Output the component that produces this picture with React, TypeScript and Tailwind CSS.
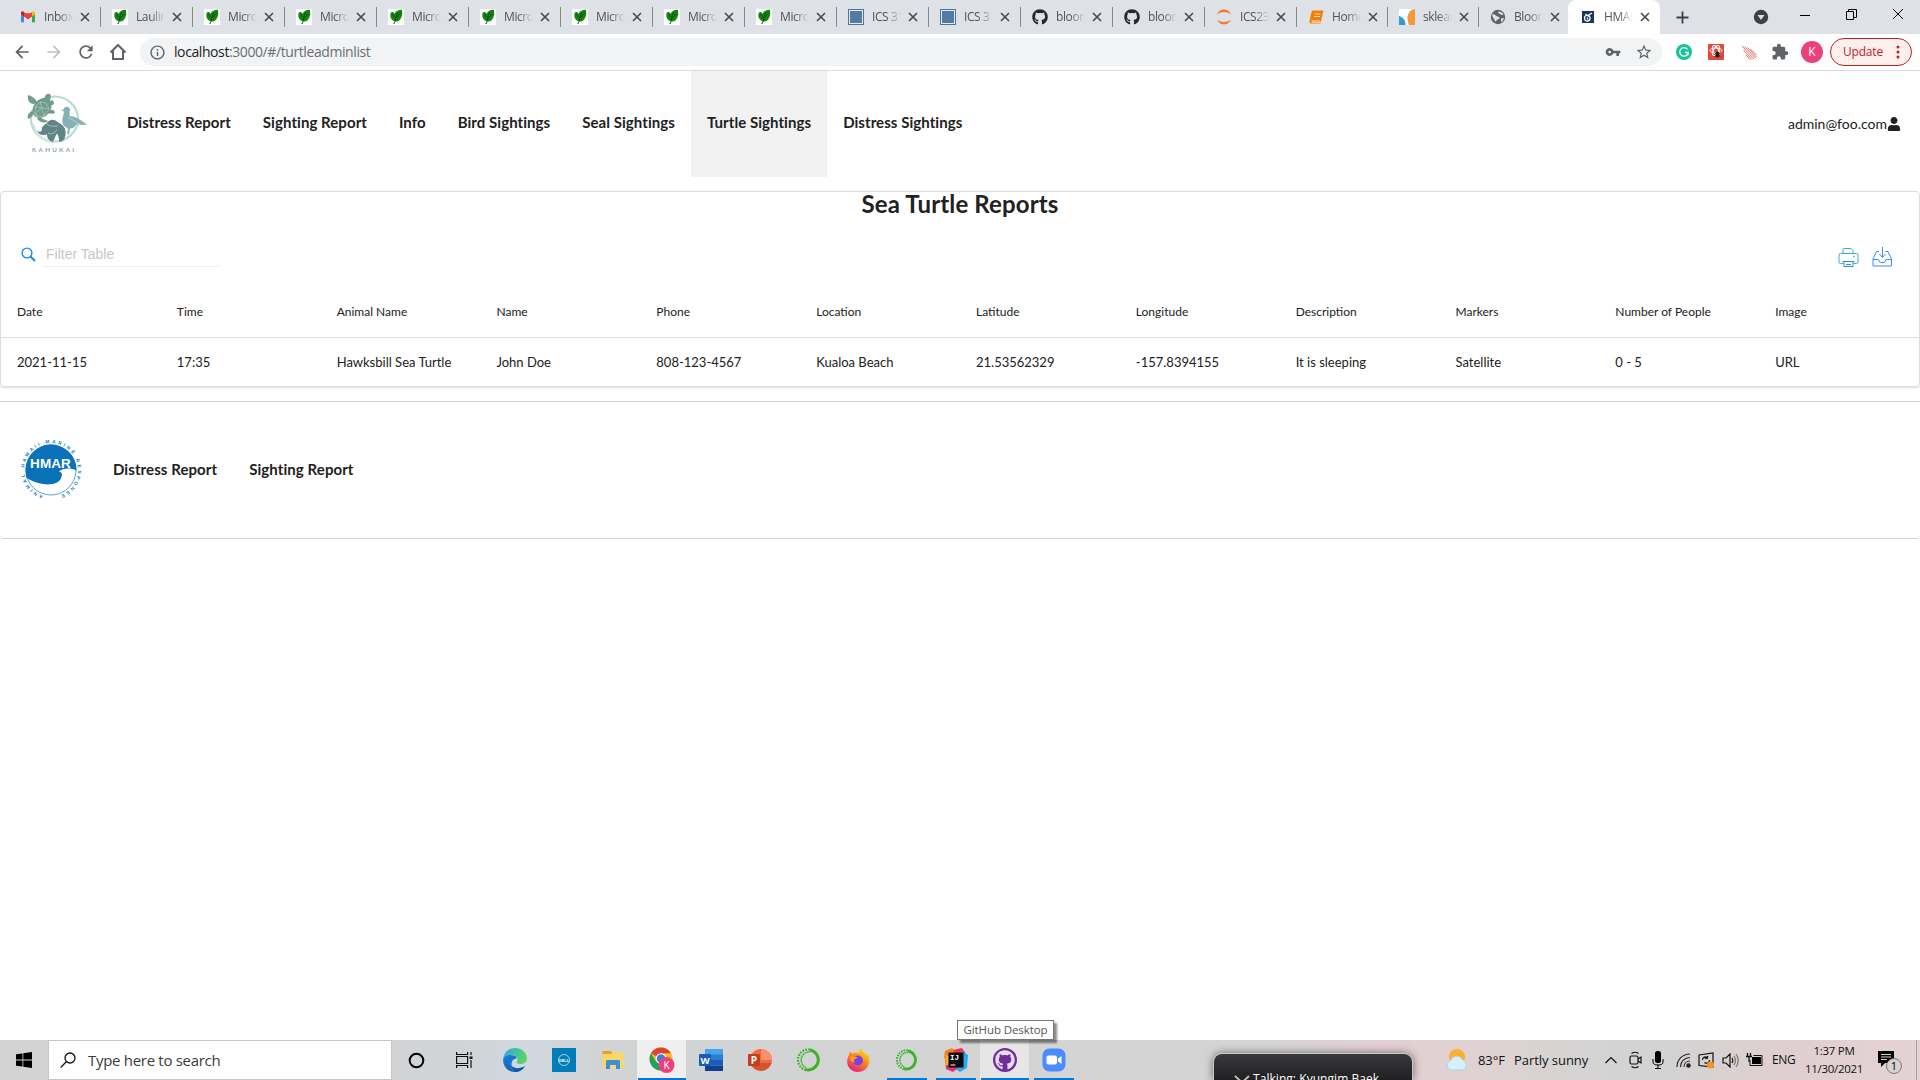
import React from 'react';
import { FaGithub, FaUser } from 'react-icons/fa';
import { MdVpnKey, MdStarBorder, MdExtension, MdArrowBack, MdArrowForward, MdRefresh, MdInfoOutline } from 'react-icons/md';

const Gmail = () => (
  <svg width="16" height="16" viewBox="0 0 16 16">
    <path d="M1 4.2V13h3V7.4L8 10.4l4-3V13h3V4.2z" fill="#ea4335" />
    <path d="M4 7.400v5.600h8V7.400l-4 3z" fill="#dee1e6" />
    <path d="M1 5v8.2h3V6.8z" fill="#4285f4" />
    <path d="M12 6.8v6.4h3V5z" fill="#34a853" />
    <path d="M1 4c0-1.6 1.6-2.1 2.6-1.3L4 3v4.4L1 5.2z" fill="#c5221f" />
    <path d="M15 4c0-1.6-1.6-2.1-2.6-1.3L12 3v4.4l3-2.2z" fill="#fbbc04" />
    <path d="M4 3l4 3 4-3v4.3l-4 3-4-3z" fill="#ea4335" />
  </svg>
);
const Leaf = () => (
  <svg width="16" height="16" viewBox="0 0 16 16">
    <rect width="16" height="16" fill="#fff" />
    <path d="M8 12.500C3 12 1.200 7 3 3.500c1-1 2.500-.8 3.600 1.200C7.500 2.500 10 .6 14 .8c-.2 2 1 4-.5 7.200C12.500 11 10.500 12.500 8 12.500z" fill="#12850f" />
    <path d="M9.500 3.500c-1.500 3-1.200 6-2.500 9-.4 1-.6 2-1.500 2.500M8.300 9l4-4.500M7.800 9.500 4.500 5.500" fill="none" stroke="#0a4d0a" strokeWidth="1" />
  </svg>
);
const Ics = () => (
  <svg width="16" height="16" viewBox="0 0 16 16">
    <rect width="16" height="16" fill="#4f7499" />
    <rect x="1.500" y="1.500" width="13" height="13" fill="#557ba3" stroke="#e6ecf2" />
  </svg>
);
const Jupyter = () => (
  <svg width="16" height="16" viewBox="0 0 16 16" fill="#f37726">
    <path d="M1 5.500C3 1.500 5.500.6 8 .6s5 .9 7 4.900C12.500 3.700 10.500 3 8 3s-4.500.7-7 2.500z" />
    <path d="M1 10.500C3 14.500 5.500 15.400 8 15.400s5-.9 7-4.900C12.500 12.300 10.500 13 8 13s-4.500-.7-7-2.500z" />
  </svg>
);
const Sk = () => (
  <svg width="16" height="16" viewBox="0 0 16 16">
    <rect width="16" height="16" fill="#fff" />
    <path d="M0 7c4 1 6.500 4 6.500 9H0z" fill="#3499cd" />
    <path d="M16 0C9.500.5 6.500 8 10 16h6z" fill="#f89939" />
  </svg>
);
const Globe = () => (
  <svg width="16" height="16" viewBox="0 0 16 16">
    <circle cx="8" cy="8" r="7.200" fill="#5f6368" />
    <path d="M2 5.500c2-.8 3.500.4 4.500 1.500s3 .4 3 2-2.500 1-3 2.500-1.500 1-2-.5S2.500 8.500 2 5.500zM8.500 2.500c2 0 4 1 5 3-1 .8-2.500.6-3.500-.4S7.500 4 8.500 2.500zM11 9.500l3-.5c-.4 2-1.600 3.500-3 4z" fill="#dee1e6" />
  </svg>
);
const Hma = () => (
  <svg width="16" height="16" viewBox="0 0 16 16">
    <rect x="2" y="2" width="12" height="12" fill="#1d3461" />
    <path d="M7.500 6.500C4.500 6 4 9 5 11c1.500 1.500 4.500 1.500 5-1 .4-2-1-3.500-2.500-3.500L5.500 5M8 6.500l4-2.500M7.500 8.500v2" stroke="#fff" strokeWidth="1.300" fill="none" />
  </svg>
);
const Close = () => (
  <svg width="10" height="10" viewBox="0 0 10 10" stroke="#45494d" strokeWidth="1.600">
    <path d="M1 1l8 8M9 1L1 9" />
  </svg>
);

type Tab = [() => React.ReactElement, string, string];
const GitTab = () => <FaGithub size={16} color="#24292f" />;
const BookTab = () => (
  <svg width="15" height="14" viewBox="0 0 15 14"><path d="M4 .5h9.500q1 0 .8 1L12 11q-.3 1-1.300 1H3q-1 0-1 .7h9l1 .8H2Q0 13.500.5 11L2.500 2Q2.800.5 4 .5z" fill="#f57c00" /><path d="M5.500 4h6M5 6.500h6M2.500 11h8.500" stroke="#fde3c8" fill="none" /></svg>
);
const tabs: Tab[] = [
  [Gmail, 'Inbox', 'w-[92px]'],
  [Leaf, 'Lauline', 'w-[92px]'],
  [Leaf, 'Micros', 'w-[92px]'],
  [Leaf, 'Micros', 'w-[92px]'],
  [Leaf, 'Micros', 'w-[92px]'],
  [Leaf, 'Micros', 'w-[92px]'],
  [Leaf, 'Micros', 'w-[92px]'],
  [Leaf, 'Micros', 'w-[92px]'],
  [Leaf, 'Micros', 'w-[92px]'],
  [Ics, 'ICS 31', 'w-[92px]'],
  [Ics, 'ICS 31', 'w-[92px]'],
  [GitTab, 'bloom', 'w-[92px]'],
  [GitTab, 'bloom', 'w-[92px]'],
  [Jupyter, 'ICS235', 'w-[92px]'],
  [BookTab, 'Home', 'w-[91px]'],
  [Sk, 'sklear', 'w-[91px]'],
  [Globe, 'Bloom', 'w-[90px]'],
];

const TabBody = ({ icon: Icon, label }: { icon: Tab[0]; label: string }) => (
  <>
    <span className="grid w-4 shrink-0 place-items-center"><Icon /></span>
    <span className="ml-2 w-[29px] shrink-0 overflow-hidden whitespace-nowrap text-xs tracking-[-0.4px] text-[#50555a] [mask-image:linear-gradient(to_right,black_50%,transparent)]">{label}</span>
    <span className="ml-[7px] shrink-0"><Close /></span>
  </>
);

const TabStrip = () => (
  <div className="flex h-[34px] items-end bg-[#dee1e6] pl-2">
    {tabs.map(([icon, label, w], i) => (
      <div key={i} className={`flex h-[34px] shrink-0 items-center pl-3 ${w}`}>
        <TabBody icon={icon} label={label} />
        {i < tabs.length - 1 && <span className="ml-auto h-5 w-px translate-x-px bg-[#85888c]" />}
      </div>
    ))}
    <div className="flex h-[34px] w-[92px] shrink-0 items-center rounded-t-lg bg-white pl-3">
      <TabBody icon={Hma} label="HMAR" />
    </div>
    <div className="flex h-[34px] grow items-center">
      <svg className="ml-4" width="13" height="13" viewBox="0 0 13 13" stroke="#3c4043" strokeWidth="1.800"><path d="M6.500 .5v12M.5 6.500h12" /></svg>
      <svg className="ml-[64px]" width="16" height="16" viewBox="0 0 16 16"><circle cx="8" cy="8" r="7.200" fill="#3c4043" /><path d="M4.500 6h7L8 11z" fill="#dee1e6" /></svg>
      <svg className="mb-1 ml-[31px]" width="11" height="10" viewBox="0 0 11 10" stroke="#000"><path d="M0 5.500h10" /></svg>
      <svg className="mb-1.5 ml-[35px]" width="11" height="11" viewBox="0 0 11 11" stroke="#000" fill="none"><path d="M.5 2.500h7v8h-7zM2.500 2.500v-2h8v8h-3" /></svg>
      <svg className="mb-1.5 ml-[35px]" width="12" height="12" viewBox="0 0 12 12" stroke="#000" fill="none"><path d="M1 1l10 10M11 1L1 11" /></svg>
    </div>
  </div>
);

const Toolbar = () => (
  <div className="flex h-[37px] items-center border-b border-[#d8dadd] bg-white pl-3 text-[#5f6368]">
    <MdArrowBack size={20} />
    <MdArrowForward size={20} className="ml-3 text-[#bdc1c6]" />
    <MdRefresh size={20} className="ml-3" />
    <svg className="ml-3" width="20" height="20" viewBox="0 0 20 20" fill="none" stroke="#5f6368" strokeWidth="2"><path d="M2.500 10.500 10 3l7.500 7.500M5 9v8h10V9" /></svg>
    <div className="ml-3 flex h-7 w-[1522px] items-center rounded-full bg-[#f1f3f4] pl-[9px] pr-[9px]">
      <MdInfoOutline size={17} />
      <span className="ml-2 text-sm tracking-[-0.41px] text-[#6a6e73]"><span className="text-[#202124]">localhost</span>:3000/#/turtleadminlist</span>
      <MdVpnKey size={16} className="ml-auto" />
      <MdStarBorder size={18} className="ml-[14px]" />
    </div>
    <span className="ml-[14px] grid size-4 place-items-center rounded-full bg-[#15c39a] text-white">
      <svg width="12" height="12" viewBox="0 0 12 12" fill="none" stroke="#fff" strokeWidth="1.300"><path d="M9.500 3.400A4.300 4.300 0 1 0 10.300 6.500H7M10.300 6.500V9" /></svg>
    </span>
    <svg className="ml-4" width="16" height="16" viewBox="0 0 16 16"><rect width="16" height="16" rx="1" fill="#dc4a3d" /><g stroke="#fff" fill="none"><ellipse cx="8" cy="6.500" rx="6" ry="2.500" /><ellipse cx="8" cy="6.500" rx="2.500" ry="5.500" transform="rotate(30 8 6.500)" /><ellipse cx="8" cy="6.500" rx="2.500" ry="5.500" transform="rotate(-30 8 6.500)" /></g><ellipse cx="9.500" cy="10.500" rx="2" ry="3" fill="#2a1512" /><path d="M6.500 8.500l6 4M6.500 12.500l6-4" stroke="#2a1512" strokeWidth=".8" /></svg>
    <svg className="ml-[18px]" width="15" height="15" viewBox="0 0 15 15" stroke="#e5605c" strokeWidth=".9" fill="none"><path d="M0 1l12 13M2.500 1.500l11 11.500M5.500 2.500l9 9.500M1.500 5l8.500 9.500M4 10l4 4.500M8.500 4l6 6" /></svg>
    <MdExtension size={18} className="ml-[14px]" />
    <span className="ml-[12px] grid size-[22px] place-items-center rounded-full bg-[#ec407a] text-xs text-white">K</span>
    <span className="ml-[7px] flex h-7 w-[82px] items-center rounded-full border border-[#c5221f] bg-[#fcefee] pl-3 text-xs tracking-[-0.2px] text-[#c5221f]">
      Update
      <svg className="ml-auto mr-[11px]" width="4" height="14" viewBox="0 0 4 14" fill="#c5221f"><circle cx="2" cy="2" r="1.500" /><circle cx="2" cy="7" r="1.500" /><circle cx="2" cy="12" r="1.500" /></svg>
    </span>
  </div>
);

const Kahukai = () => (
  <svg width="62" height="62" viewBox="0 0 62 62">
    <ellipse cx="28.500" cy="27" rx="23.500" ry="22.500" fill="none" stroke="#b5ded3" strokeWidth="2.200" />
    <path d="M8 33C10 44 18 49 27 50" fill="none" stroke="#cfeae3" strokeWidth="2" />
    <g fill="#729c8c">
      <ellipse cx="16" cy="16" rx="8.500" ry="11" transform="rotate(38 16 16)" />
      <path d="M19 8c-1-5 2-7 5-6 2 3 0 6-1 8zM8 12C3 12 1 7 2 3c4 1 8 4 9 7zM22 18c4-1 7 0 7 3-3 1-6 1-9-1zM13 25c2 1 4 2 9 4-4 3-8 1-11-2zM6 19c-4 2-5 5-4 8 3-1 5-4 6-6zM23 10c2-3 5-2 5 1 0 2-3 3-5 2z" />
    </g>
    <path d="M9 15l5-5 6 1 3 6-5 7-7 1zM14 10l2 6 7 1M16 16l-5 4M16 16l2 8M9 15l7 1M8 20l3 5" fill="none" stroke="#b8d3c8" strokeWidth=".6" />
    <path d="M11 38c1 2 3 2 4.500 1 0-4 2-6 5-7.500 3-4.500 8-5 11.500-1 5 2 8.500 6 7.500 12-.5 4-2 7-6 7.500-1-3-.5-6-2.500-8.500-1.500 2-2.500 5-4 8.500-3.500-1-6-3-6-7.500-4 1-8 1-10-4.500z" fill="#608487" />
    <path d="M21 32c3 3 7 2 11 2M22 41c4 2 6 0 9-3" fill="none" stroke="#b3c8c6" strokeWidth=".9" />
    <path d="M34 18.500l4-1.500c0-3 5-3 6 0 0 3-1 5 0 7.500 5-1 9 3 17 8-4 1-8 0-11 0-1 3-4 4-6 4l-1 6-2-1 1-5c-5-2-7-7-5-12 1-3 1-4 0-6z" fill="#88b1b5" />
    <path d="M42 26c4 0 7 5 12 6" fill="none" stroke="#b8d5d6" />
    <text x="6" y="59.500" fontFamily="Lato, sans-serif" fontWeight="700" fontSize="6.200" letterSpacing="2.300" fill="#8aa3a2">KAHUKAI</text>
  </svg>
);

const Hmar = () => (
  <svg width="62" height="62" viewBox="0 0 62 62">
    <defs>
      <path id="ring" d="M31 57.800A26.800 26.800 0 1 1 31.010 57.800" />
    </defs>
    <circle cx="31" cy="31" r="25" fill="#fff" stroke="#5ea3d4" strokeWidth="1" />
    <path d="M6 36A25.500 25.500 0 1 1 56.500 31.500C50 28.500 43 29 39 32.500c4 1 3 4 2 7C36 48 20 47 6.500 39z" fill="#0a72b9" />
    <text x="30.500" y="28.500" textAnchor="middle" fontFamily="Liberation Sans, sans-serif" fontSize="13.500" fill="#fff">HMAR</text>
    <text fontFamily="Liberation Sans, sans-serif" fontWeight="700" fontSize="4.800" letterSpacing="2.300" fill="#1b7cc0"><textPath href="#ring" startOffset="8">ANIMAL HAWAII MARINE RESPONSE</textPath></text>
  </svg>
);

const navItems = ['Distress Report', 'Sighting Report', 'Info', 'Bird Sightings', 'Seal Sightings', 'Turtle Sightings', 'Distress Sightings'];
const columns = [
  ['Date', '2021-11-15'], ['Time', '17:35'], ['Animal Name', 'Hawksbill Sea Turtle'], ['Name', 'John Doe'],
  ['Phone', '808-123-4567'], ['Location', 'Kualoa Beach'], ['Latitude', '21.53562329'], ['Longitude', '-157.8394155'],
  ['Description', 'It is sleeping'], ['Markers', 'Satellite'], ['Number of People', '0 - 5'], ['Image', 'URL'],
];

const Page = () => (
  <main className="h-[969px] bg-white font-['Lato',sans-serif] text-[#212121]">
    <nav className="flex h-[106px] items-center pr-[19px]">
      <div className="ml-[26px] mr-[23px] w-[62px] pb-0.5"><Kahukai /></div>
      {navItems.map((n) => (
        <span key={n} className={`flex h-full items-center whitespace-nowrap px-4 pb-1 text-[15px] font-bold tracking-[0.06px] ${n === 'Turtle Sightings' ? 'bg-[#f2f2f2]' : ''}`}>{n}</span>
      ))}
      <span className="ml-auto flex items-center text-sm">admin@foo.com<FaUser size={14} /></span>
    </nav>
    <section className="mt-[14px] h-[196px] rounded border border-[#dcddde] shadow-[0_1px_2px_rgba(34,36,38,0.15)]">
      <h1 className="text-center text-2xl font-bold leading-6 tracking-[0.12px]">Sea Turtle Reports</h1>
      <div className="mt-7 flex h-[49px] items-start pl-5 pr-[25px]">
        <svg className="mt-[3px]" width="15" height="15" viewBox="0 0 15 15" fill="none" stroke="#1e88f5" strokeWidth="1.400"><circle cx="6" cy="6" r="4.900" /><path d="M9.500 9.500 14 14" strokeWidth="1.900" /></svg>
        <div className="ml-1.5 h-[23px] w-[178px] border-b border-[#efefef] pl-1 font-['Liberation_Sans',sans-serif] text-sm leading-5 text-[#c7c7c7]">Filter Table</div>
        <svg className="ml-auto mt-[3px]" width="21" height="21" viewBox="0 0 21 21" fill="none" stroke="#45a5dc"><path d="M5 6.500V2.500q0-1 1-1h7l2 2v3M5.500 16.500h-3Q1 16.500 1 15V8q0-1.500 1.500-1.500h16Q20 6.500 20 8v7q0 1.500-1.500 1.500h-3" /><path d="M4.500 14.500h12M6 14.500v5h9v-5M8 17.500h5" stroke="#2693d3" /><path d="M15 9.500h1.500" strokeWidth="1.500" /></svg>
        <svg className="ml-[13px] mr-px mt-[3px]" width="21" height="21" viewBox="0 0 21 21" fill="none" stroke="#3f8ef7"><path d="M7 4.500H4.500L1 12v7h18.500v-7L16 4.500h-2.500M1 12.500h5.500c.5 0 .5 3 2 3h3.500c1.500 0 1.500-3 2-3h5.500M10.500 0v10M7.500 7l3 3.500 3-3.500" /></svg>
      </div>
      <div className="grid h-[45px] grid-cols-12 items-center border-b border-[#dededf] pb-1.5 text-xs">
        {columns.map(([h]) => <span key={h} className="pl-4">{h}</span>)}
      </div>
      <div className="grid h-[48px] grid-cols-12 items-center pt-0.5 text-[13px]">
        {columns.map(([h, v]) => <span key={h} className="whitespace-nowrap pl-4">{v}</span>)}
      </div>
    </section>
    <footer className="mt-[14px] flex h-[138px] items-center rounded-b border-y border-[#d4d4d5] pl-5 text-[15px] font-bold tracking-[0.08px]">
      <Hmar />
      <span className="mb-0.5 ml-[31px]">Distress Report</span>
      <span className="mb-0.5 ml-8">Sighting Report</span>
    </footer>
  </main>
);

const Edge = () => (
  <svg width="24" height="24" viewBox="0 0 24 24">
    <defs>
      <linearGradient id="eg" x1="0" y1="0" x2="1" y2=".3"><stop offset="0" stopColor="#2aa7e0" /><stop offset="1" stopColor="#59d36a" /></linearGradient>
      <linearGradient id="eb" x1="0" y1="0" x2="1" y2="1"><stop offset="0" stopColor="#1487d8" /><stop offset="1" stopColor="#0b4a9e" /></linearGradient>
    </defs>
    <path d="M.3 11C1 4 6 0 12 0c7 0 12 5 12 10 0 4-3 6-6.500 6-3 0-4.500-1-3.500-2.500C15.500 11 14 7 9.500 7 5 7 1.500 9 .3 11z" fill="url(#eg)" />
    <path d="M.2 11C1.500 8 5 6.800 9 7c-4 2.500-3.500 7-1 10 3 4 9 4 14 1-2 4-6 6-10 6C5 24-.5 18 .2 11z" fill="url(#eb)" />
    <path d="M9 7.200c-4 1-4.500 4-4.300 7C5 19 8 23 12.500 24c-3-2.500-5-6-3.500-10.500.5-1.500 2-2.500 2.500-2.500C15 11 14 7.300 9 7.200z" fill="#1b74c9" />
  </svg>
);
const Dell = () => (
  <svg width="24" height="24" viewBox="0 0 24 24"><rect width="24" height="24" fill="#007db8" /><circle cx="12" cy="12" r="5.500" fill="none" stroke="#cfe6f3" strokeWidth=".8" /><text x="12" y="13.500" textAnchor="middle" fontSize="3.800" fontWeight="700" fontFamily="Liberation Sans, sans-serif" fill="#fff">DELL</text></svg>
);
const Explorer = () => (
  <svg width="24" height="24" viewBox="0 0 24 24"><path d="M1.500 3h8l1.500 2v4h-9.500z" fill="#e2a31b" /><path d="M1.500 6h9l1.500-1.500h10.500V20h-21z" fill="#fdd666" /><path d="M5 21v-7.500q0-1.500 1.500-1.500h11q1.500 0 1.500 1.500V21h-4v-4H9v4z" fill="#3a8edb" /></svg>
);
const Chrome = () => (
  <svg width="26" height="26" viewBox="0 0 26 26">
    <circle cx="12" cy="12" r="11.500" fill="#fbc116" />
    <path d="M12 12 2 6.300A11.500 11.500 0 0 1 22 6.300h-10z" fill="#dc4437" />
    <path d="M2 6.300A11.500 11.500 0 0 0 12 23.500l5-8.500-10-.5z" fill="#1ea362" />
    <circle cx="12" cy="11.500" r="5.300" fill="#fff" /><circle cx="12" cy="11.500" r="4.200" fill="#3b7de0" />
    <circle cx="17.500" cy="18" r="8" fill="#ec407a" />
    <text x="17.500" y="21.500" textAnchor="middle" fontSize="10" fontFamily="Open Sans, sans-serif" fill="#fff">K</text>
  </svg>
);
const Word = () => (
  <svg width="24" height="24" viewBox="0 0 24 24"><path d="M6 1h18v6H6z" fill="#41a5ee" /><path d="M6 6.500h18V12H6z" fill="#2b7cd3" /><path d="M6 12h18v5.500H6z" fill="#185abd" /><path d="M6 17.500h18V23H6z" fill="#103f91" /><rect y="6" width="12" height="12" rx="1" fill="#185abd" /><text x="6" y="15.500" textAnchor="middle" fontSize="9.500" fontWeight="700" fontFamily="Open Sans, sans-serif" fill="#fff">W</text></svg>
);
const Ppt = () => (
  <svg width="24" height="24" viewBox="0 0 24 24"><circle cx="13" cy="12" r="11" fill="#ed6c47" /><path d="M13 1a11 11 0 0 1 11 11H13z" fill="#ff8f6b" /><path d="M2.500 15A11 11 0 0 0 23.500 15z" fill="#d35230" /><rect y="6" width="12" height="12" rx="1" fill="#c43e1c" /><text x="6" y="15.700" textAnchor="middle" fontSize="10" fontWeight="700" fontFamily="Open Sans, sans-serif" fill="#fff">P</text></svg>
);
const Conda = ({ size = 24 }: { size?: number }) => (
  <svg width={size} height={size} viewBox="0 0 24 24" fill="none" stroke="#3eb12b">
    <path d="M13 2a10 10 0 1 1-5 19.300" strokeWidth="3" />
    <path d="M13 1.500A10.500 10.500 0 0 0 8 21.800" strokeWidth="2.200" strokeDasharray="1.800 1.200" />
    <path d="M13 3.800A8.300 8.300 0 0 0 9 19.600" strokeWidth="1.600" strokeDasharray="1.500 .6" />
  </svg>
);
const Firefox = () => (
  <svg width="24" height="24" viewBox="0 0 24 24">
    <defs><linearGradient id="ff" x1=".8" y1="0" x2=".2" y2="1"><stop offset="0" stopColor="#ffe226" /><stop offset=".45" stopColor="#ff8a16" /><stop offset="1" stopColor="#e31587" /></linearGradient></defs>
    <path d="M3 7c0-2 1-3 1.500-3.500.3 1.500 1 2 2 2.200C9 3.500 12 5 13 5c0-2 1-4 2.500-5 0 2.500 2 3.500 4 5.500 1 1 1 2 1.500 2l1-1.500C26 15 21 24 12 24 4 24-2 16 3 7z" fill="url(#ff)" />
    <circle cx="12" cy="12.500" r="5" fill="#7542e5" /><path d="M4 9c3-1.500 6-.5 8 1-2 0-2 1-3.500 1.500-1 1-.5 2 .5 3-4 0-5-3-5-5.500z" fill="#ff9a1f" />
  </svg>
);
const Intellij = () => (
  <svg width="24" height="24" viewBox="0 0 24 24"><path d="M1 3l7-3 4 4-7 9-5-3z" fill="#fc801d" /><path d="M9 2l9-2 4 6-5 8z" fill="#fe2857" /><path d="M17 3l7 4-1 13-7 4-6-4z" fill="#23a9f5" /><path d="M1 12l5-1 8 9-5 4-7-3z" fill="#e0356c" /><path d="M2 7l4 2v7l-5 2z" fill="#f7a938" /><rect x="4.500" y="4.500" width="15" height="15" fill="#0a0a0a" /><path d="M6.500 17h5" stroke="#fff" /><text x="6" y="12" fontSize="7.500" fontWeight="700" fontFamily="Liberation Mono, monospace" fill="#fff">IJ</text></svg>
);
const GitDesk = () => (
  <span className="grid size-6 place-items-center rounded-full bg-[#6e2f9b]"><FaGithub size={20} color="#e9dcf1" /></span>
);
const Zoom = () => (
  <svg width="24" height="24" viewBox="0 0 24 24"><rect x=".5" y=".5" width="23" height="23" rx="7" fill="#4a8cff" /><rect x="4.500" y="7.500" width="10.500" height="9" rx="2" fill="#fff" /><path d="M15.800 10.800 19.500 8v8l-3.700-2.800z" fill="#fff" /></svg>
);

const apps: [() => React.ReactElement, string, string][] = [
  [Edge, '', ''],
  [Dell, '', ''],
  [Explorer, '', ''],
  [Chrome, 'bg-[#efefef]', 'w-12'],
  [Word, '', ''],
  [Ppt, '', ''],
  [() => <Conda />, '', ''],
  [Firefox, '', ''],
  [() => <Conda size={22} />, '', 'w-10'],
  [Intellij, '', 'w-10'],
  [GitDesk, 'bg-[#e6e6e6]', 'w-12'],
  [Zoom, '', 'w-10'],
];

const Taskbar = () => (
  <div className="relative flex h-10 bg-[linear-gradient(90deg,#d2d2d2_0%,#d2d3d4_24%,#d0d8e0_27%,#d2d3d4_31%,#d4d4d4_66%,#e3cfd3_72%,#e1d1d3_76%,#d5d3d3_82%,#d3d3d3_87%,#e0cfd0_93%,#e4d2d4_100%)] font-['Open_Sans',sans-serif] text-[#111]">
    <div className="grid w-12 place-items-center">
      <svg width="16" height="16" viewBox="0 0 16 16"><path d="M0 2.300 6.500 1.400v6.200H0zM7.300 1.300 16 0v7.600H7.300zM0 8.400h6.500v6.200L0 13.700zM7.300 8.400H16V16l-8.700-1.300z" /></svg>
    </div>
    <div className="flex w-[344px] items-center border border-[#c6c6c6] bg-white pl-[11px] text-[15px] tracking-[-0.3px] text-[#3b3b3b]">
      <svg width="16" height="17" viewBox="0 0 16 17" fill="none" stroke="#111" strokeWidth="1.300"><circle cx="10" cy="6" r="5" /><path d="M6.500 9.500.7 15.500" /></svg>
      <span className="ml-3">Type here to search</span>
    </div>
    <div className="grid w-12 place-items-center"><svg width="17" height="17" viewBox="0 0 17 17"><circle cx="8.500" cy="8.500" r="6.800" fill="none" stroke="#000" strokeWidth="2" /></svg></div>
    <div className="grid w-12 place-items-center">
      <svg width="17" height="16" viewBox="0 0 17 16" fill="none" stroke="#111" strokeWidth="1.200"><path d="M.6 0v2.500h11V0M.6 4.500h11v7H.6zM.6 16v-2.500h11V16M15 0v3M15 8v8" /><path d="M13.500 4.500h3v2.500h-3z" fill="#111" stroke="none" /></svg>
    </div>
    <div className="flex pl-0.5">
      {apps.map(([Icon, bg, bar], i) => (
        <div key={i} className={`flex w-[49px] flex-col items-center justify-end ${bg}`}>
          <div className="grid flex-1 place-items-center pt-0.5"><Icon /></div>
          <div className={`h-0.5 ${bar ? 'bg-[#0078d7]' : ''} ${bar}`} />
        </div>
      ))}
    </div>
    <div className="ml-[135px] mt-[13px] h-[27px] w-[200px] overflow-hidden rounded-t-[9px] border border-b-0 border-[#c9c9c9] bg-gradient-to-b from-[#39393b] to-[#202022] pl-5 pt-[16px] text-[12px] leading-[17px] text-white shadow-[0_0_8px_rgba(0,0,0,0.5)]">
      <span className="flex gap-0.5 whitespace-nowrap tracking-[0.05px]"><svg className="mt-1" width="17" height="16" viewBox="0 0 17 16" stroke="#bbb" strokeWidth="2"><path d="M1 2l14 13M15 2 1 15" /></svg>Talking: Kyungim Baek</span>
    </div>
    <div className="flex flex-1 items-center">
      <svg className="ml-[32px]" width="24" height="24" viewBox="0 0 24 24"><circle cx="12" cy="9" r="8" fill="#fbb02e" /><path d="M6 22a5 5 0 0 1-.5-9.500 6.500 6.500 0 0 1 12-.5A5.200 5.200 0 0 1 17.500 22z" fill="#d8effc" stroke="#a9d5f2" /></svg>
      <span className="mt-0.5 ml-[9px] w-9 whitespace-nowrap text-[13px] tracking-[-0.1px]">83°F</span>
      <span className="mt-0.5 w-[91px] whitespace-nowrap text-[13px] tracking-[-0.05px]">Partly sunny</span>
      <svg width="12" height="8" viewBox="0 0 12 8" fill="none" stroke="#111" strokeWidth="1.200"><path d="M.5 7 6 1.500 11.500 7" /></svg>
      <svg className="ml-[12px]" width="13" height="18" viewBox="0 0 13 18" fill="none" stroke="#111" strokeWidth="1.200"><rect x="1" y="5" width="8" height="8" rx="1.500" /><path d="M9 8l3-2v6L9 10M2.500 2.500Q6 0 9.500 2.500M2.500 15.500Q6 18 9.500 15.500" /></svg>
      <svg className="ml-[10px]" width="12" height="18" viewBox="0 0 12 18"><rect x="3" y="0" width="6" height="12" rx="2.500" /><path d="M1 8v3q0 3 5 3t5-3V8M6 14v3.500M3 17.500h6" fill="none" stroke="#000" /></svg>
      <svg className="ml-[12px]" width="15" height="15" viewBox="0 0 15 15" fill="none" stroke="#222" strokeWidth="1.100"><path d="M1 14C1 6.500 6.500 1 14 1M4.500 14C4.500 8.500 8.500 4.500 14 4.500M8 14c0-3.500 2.500-6 6-6" /><circle cx="12.500" cy="12.500" r="1.700" fill="#222" /></svg>
      <svg className="ml-[7px]" width="17" height="17" viewBox="0 0 17 17" fill="none" stroke="#111" strokeWidth="1.200"><path d="M1 3l14-2v14L1 13.500zM10 4l-1 2.500-2.500-.5M4.500 8c0-3 3-4 5-2M11.500 8c0 3-3 4-5 2.500" /><circle cx="12.500" cy="13" r="3.600" fill="#f7941d" stroke="none" /></svg>
      <svg className="ml-[7px]" width="17" height="15" viewBox="0 0 17 15" fill="none" stroke="#111" strokeWidth="1.200"><path d="M1 5h3l4-4v13L4 10H1zM10 5q1.500 2.500 0 5" /><path d="M12 3q3 4.500 0 9M14 1q4.500 6.500 0 13" stroke="#777" /></svg>
      <svg className="ml-[7px]" width="17" height="14" viewBox="0 0 17 14"><path d="M1.500 0v3M4.500 0v3M0 3.500h6M3 4v5" stroke="#111" fill="none" strokeWidth="1.300" /><rect x="6" y="4" width="9" height="7" /><path d="M4 7v5.500h12v-10H7.500" stroke="#111" fill="none" /></svg>
      <span className="ml-[9px] w-[31px] text-xs tracking-[-0.3px]">ENG</span>
      <span className="w-[62px] whitespace-nowrap text-center text-[11.5px] leading-[18px] tracking-[-0.3px]">1:37 PM<br />11/30/2021</span>
      <svg className="ml-[12px] mt-1" width="26" height="26" viewBox="0 0 26 26"><path d="M1 2h16v12h-9l-4 4v-4H1z" /><path d="M4 5.500h10M4 8h10M4 10.500h6" stroke="#e0d0d2" /><circle cx="17" cy="17" r="7.500" fill="#d8d0d1" stroke="#777" /><text x="17" y="21" textAnchor="middle" fontSize="11" fontFamily="Open Sans, sans-serif">1</text></svg>
      <span className="ml-auto mr-[3px] h-10 w-px bg-[#a9a0a1]" />
    </div>
    <span className="absolute -top-5 left-[957px] flex h-[20px] w-[97px] items-center justify-center whitespace-nowrap border border-[#767676] bg-white text-[11.5px] tracking-[-0.1px] text-[#575757] shadow-[3px_3px_2px_rgba(0,0,0,0.45)]">GitHub Desktop</span>
  </div>
);

export default function App() {
  return (
    <div className="h-[1080px] w-[1920px] overflow-hidden bg-white font-['Open_Sans',sans-serif]">
      <TabStrip />
      <Toolbar />
      <Page />
      <Taskbar />
    </div>
  );
}
